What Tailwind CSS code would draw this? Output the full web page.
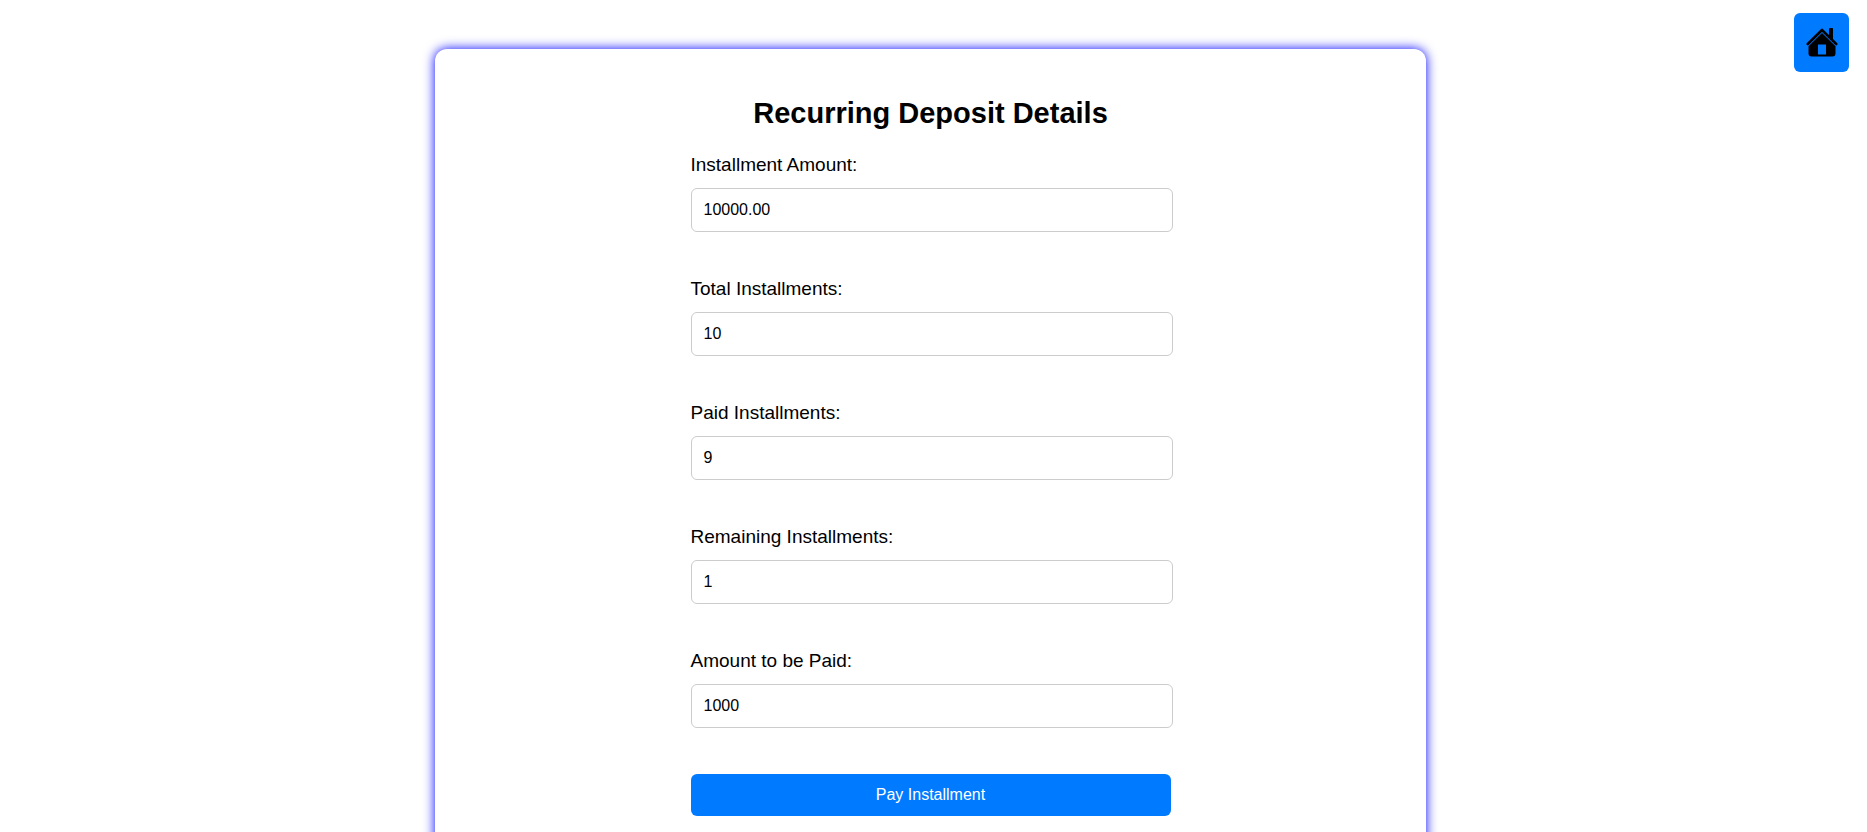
<!DOCTYPE html>
<html lang="en">
<head>
<meta charset="utf-8">
<meta name="viewport" content="width=device-width, initial-scale=1">
<title>Recurring Deposit Details</title>
<script src="https://cdn.jsdelivr.net/npm/@tailwindcss/browser@4"></script>
</head>
<body class="bg-white text-black font-['Liberation_Sans',Arial,sans-serif] overflow-x-hidden overflow-y-hidden">
<a href="#" aria-label="Home" class="fixed top-[13px] right-[18px] flex h-[59px] w-[55px] items-center justify-center rounded-[6px] bg-[#007bff]">
  <svg class="h-8 w-8" viewBox="0 0 32 32" aria-hidden="true">
    <path d="M1.800 17 16 3l14.200 14" fill="none" stroke="#000" stroke-width="2.600" stroke-linecap="round" stroke-linejoin="round"/>
    <path d="M23 1.800q0-.7.700-.7h2.600q.7 0 .7.700v12l-4-3.800z" fill="#000"/>
    <path fill-rule="evenodd" d="M16 6 29.500 19.300V26.500a3 3 0 0 1-3 3h-21a3 3 0 0 1-3-3v-7.200zM12 17.500v10h8v-10z" fill="#000"/>
  </svg>
</a>
<main class="mt-[49px] pr-[6px]">
  <section class="mx-auto w-full max-w-[991px] rounded-[12px] bg-white px-4 pt-[46px] pb-12 shadow-[0_0_12px_#0000ff]">
    <form class="mx-auto w-full max-w-[480px]">
      <h1 class="mb-[21px] text-center text-[29px] leading-[36px] font-bold">Recurring Deposit Details</h1>
      <div class="mb-11">
        <label for="amount" class="mb-[10px] block text-[19px] leading-[26px]">Installment Amount:</label>
        <input id="amount" type="text" value="10000.00" class="block h-11 w-[calc(100%+2px)] rounded-[6px] border border-[#ccc] bg-white px-3 text-[16px]">
      </div>
      <div class="mb-11">
        <label for="total" class="mb-[10px] block text-[19px] leading-[26px]">Total Installments:</label>
        <input id="total" type="text" value="10" class="block h-11 w-[calc(100%+2px)] rounded-[6px] border border-[#ccc] bg-white px-3 text-[16px]">
      </div>
      <div class="mb-11">
        <label for="paid" class="mb-[10px] block text-[19px] leading-[26px]">Paid Installments:</label>
        <input id="paid" type="text" value="9" class="block h-11 w-[calc(100%+2px)] rounded-[6px] border border-[#ccc] bg-white px-3 text-[16px]">
      </div>
      <div class="mb-11">
        <label for="remaining" class="mb-[10px] block text-[19px] leading-[26px]">Remaining Installments:</label>
        <input id="remaining" type="text" value="1" class="block h-11 w-[calc(100%+2px)] rounded-[6px] border border-[#ccc] bg-white px-3 text-[16px]">
      </div>
      <div class="mb-[46px]">
        <label for="due" class="mb-[10px] block text-[19px] leading-[26px]">Amount to be Paid:</label>
        <input id="due" type="text" value="1000" class="block h-11 w-[calc(100%+2px)] rounded-[6px] border border-[#ccc] bg-white px-3 text-[16px]">
      </div>
      <button type="button" class="block h-[42px] w-full cursor-pointer rounded-[6px] bg-[#007bff] text-[16px] text-white">Pay Installment</button>
    </form>
  </section>
</main>
</body>
</html>
